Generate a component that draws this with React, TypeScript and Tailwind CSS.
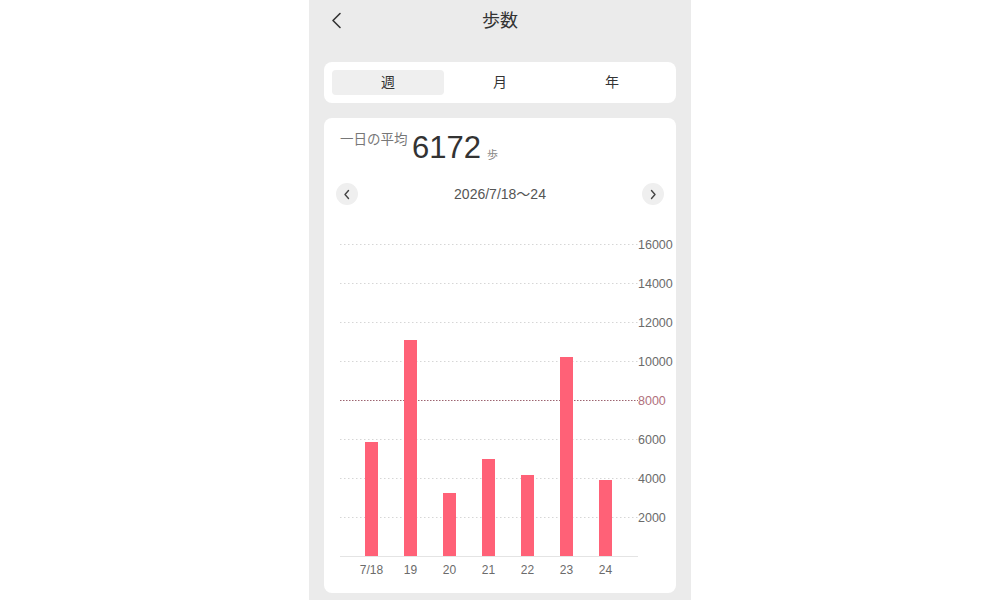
import React from "react";

const FONT = "'Liberation Sans','Noto Sans CJK JP',sans-serif";

const bars = [
  { label: "7/18", value: 5846 },
  { label: "19", value: 11077 },
  { label: "20", value: 3231 },
  { label: "21", value: 4974 },
  { label: "22", value: 4154 },
  { label: "23", value: 10205 },
  { label: "24", value: 3897 },
];

function Chart() {
  const base = 331;
  const step = 39; // px per 2000
  const grid = [16000, 14000, 12000, 10000, 8000, 6000, 4000, 2000];
  return (
    <svg width="352" height="360" viewBox="0 0 352 360" className="block">
      {grid.map((g) => {
        const y = base - (g / 2000) * step + 0.5;
        const goal = g === 8000;
        return (
          <g key={g}>
            <line
              x1={16}
              x2={314}
              y1={y}
              y2={y}
              stroke={goal ? "#9c6470" : "#d6d6d6"}
              strokeWidth={1}
              strokeDasharray={goal ? "1.5 1.5" : "1.5 2.5"}
            />
            <text
              x={314}
              y={y + 4.5}
              fontSize="12.5"
              fill={goal ? "#b0707c" : "#6b6b6b"}
              style={{ fontFamily: FONT }}
            >
              {g}
            </text>
          </g>
        );
      })}
      <line x1={16} x2={314} y1={base + 0.5} y2={base + 0.5} stroke="#e4e4e4" strokeWidth={1} />
      {bars.map((b, i) => {
        const h = (b.value / 2000) * step;
        const x = 41 + i * 39;
        return (
          <g key={b.label}>
            <rect x={x} y={base - h} width={13} height={h} fill="#ff6177" />
            <text
              x={x + 6.5}
              y={348.5}
              fontSize="12"
              fill="#6b6b6b"
              textAnchor="middle"
              style={{ fontFamily: FONT }}
            >
              {b.label}
            </text>
          </g>
        );
      })}
    </svg>
  );
}

function Chevron({ dir }: { dir: "left" | "right" }) {
  return (
    <svg width="8" height="11" viewBox="0 0 8 11">
      <path
        d={dir === "left" ? "M5.5 1.5 L2 5.5 L5.5 9.5" : "M2.5 1.5 L6 5.5 L2.5 9.5"}
        fill="none"
        stroke="#444"
        strokeWidth="1.4"
        strokeLinecap="round"
        strokeLinejoin="round"
      />
    </svg>
  );
}

export default function App() {
  return (
    <div className="w-full h-[600px] bg-white flex justify-center overflow-hidden" style={{ fontFamily: FONT }}>
      <div className="w-[382px] h-full bg-[#ebebeb] px-[15px]">
        <div className="h-10 flex items-center">
          <div className="w-[40px] pl-[7px] flex items-center">
            <svg width="11" height="17" viewBox="0 0 11 17">
              <path d="M9 1.5 L2 8.5 L9 15.5" fill="none" stroke="#333" strokeWidth="1.6" strokeLinecap="round" strokeLinejoin="round" />
            </svg>
          </div>
          <div className="flex-1 text-center text-[18px] text-[#333] leading-6 pt-[1px]">歩数</div>
          <div className="w-[40px]" />
        </div>

        <div className="mt-[22px] h-[41px] rounded-[8px] bg-white p-[8px] grid grid-cols-3 text-[14px] text-[#333]">
          <div className="rounded-[4px] bg-[#efefef] flex items-center justify-center">週</div>
          <div className="flex items-center justify-center">月</div>
          <div className="flex items-center justify-center">年</div>
        </div>

        <div className="mt-[15px] rounded-[8px] bg-white pt-3 pb-2">
          <div className="flex items-start pl-4">
            <div className="w-[67px] text-[13.5px] leading-4 mt-[2px] text-[#777] whitespace-nowrap">一日の平均</div>
            <div className="text-[31px] leading-[36px] ml-[5px] text-[#333]">6172</div>
            <div className="text-[11px] leading-[14px] mt-[18px] ml-[6px] text-[#888]">歩</div>
          </div>

          <div className="mt-[17px] px-3 flex items-center justify-between">
            <div className="w-[22px] h-[22px] rounded-full bg-[#efefef] flex items-center justify-center">
              <Chevron dir="left" />
            </div>
            <div className="text-[14px] text-[#555] leading-5">2026/7/18〜24</div>
            <div className="w-[22px] h-[22px] rounded-full bg-[#efefef] flex items-center justify-center">
              <Chevron dir="right" />
            </div>
          </div>

          <div className="mt-[20px]">
            <Chart />
          </div>
        </div>
      </div>
    </div>
  );
}
